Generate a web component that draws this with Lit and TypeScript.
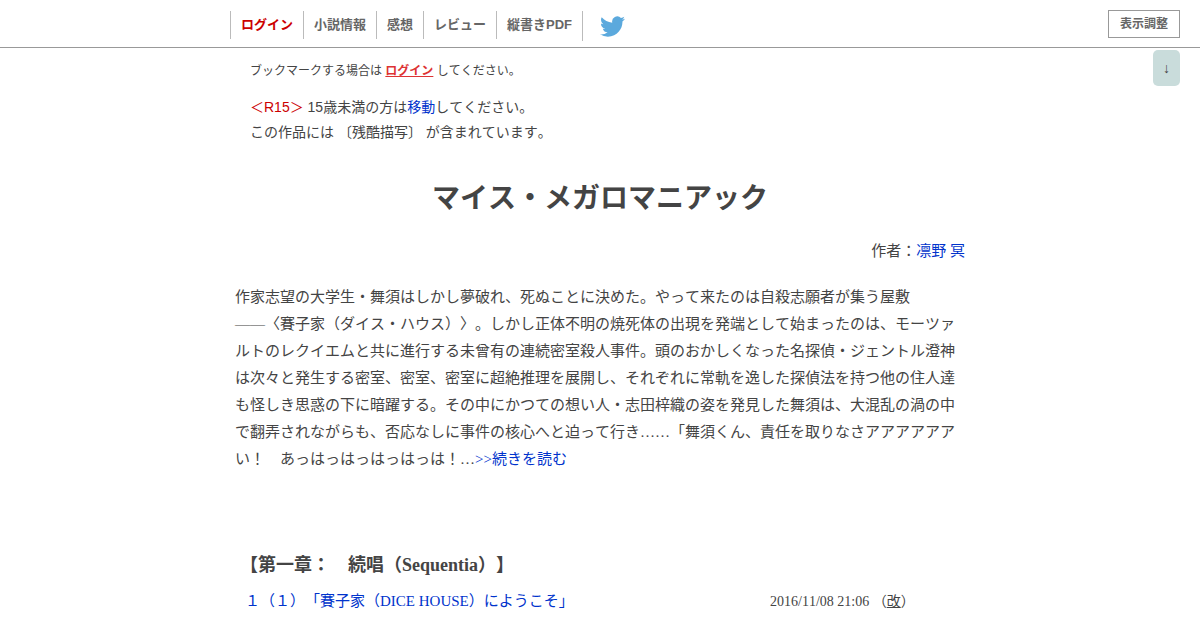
import { LitElement, html, css } from "lit";
import { customElement } from "lit/decorators.js";

interface NavItem {
  label: string;
  current?: boolean;
}

const NAV: NavItem[] = [
  { label: "ログイン", current: true },
  { label: "小説情報" },
  { label: "感想" },
  { label: "レビュー" },
  { label: "縦書きPDF" },
];

@customElement("site-header")
class SiteHeader extends LitElement {
  static styles = css`
    :host {
      display: block;
      font-family: "Liberation Sans", "Noto Sans CJK JP", sans-serif;
      border-bottom: 1px solid #999;
    }
    .bar {
      display: grid;
      grid-template-columns: 1fr minmax(0, 740px) 1fr;
      height: 47px;
    }
    .nav {
      grid-column: 2;
      display: flex;
      align-items: flex-start;
      padding-top: 11px;
    }
    .list {
      display: flex;
      margin: 0;
      padding: 0;
      list-style: none;
    }
    .link {
      display: block;
      padding: 0 10px;
      border-left: 1px solid #bbb;
      font-size: 13px;
      font-weight: bold;
      line-height: 28px;
      white-space: nowrap;
      color: #666;
      text-decoration: none;
    }
    .current {
      color: #c00;
    }
    .share {
      display: flex;
      align-items: center;
      height: 30px;
      padding-left: 17px;
      border-left: 1px solid #bbb;
    }
    .bird {
      display: block;
      width: 25px;
      height: 21px;
      fill: #5ba9dd;
    }
    .tools {
      justify-self: end;
      padding: 10px 20px 0 0;
    }
    .adjust {
      display: block;
      box-sizing: border-box;
      width: 72px;
      height: 28px;
      padding: 0 0 4px;
      border: 1px solid #999;
      background: #fff;
      color: #666;
      font: bold 12px "Liberation Sans", "Noto Sans CJK JP", sans-serif;
    }
  `;

  render() {
    return html`
      <header class="bar">
        <nav class="nav">
          <ul class="list">
            ${NAV.map(
              (item) => html`<li>
                <a class="link ${item.current ? "current" : ""}" href="#">${item.label}</a>
              </li>`
            )}
          </ul>
          <a class="share" href="#" aria-label="Twitter">
            <svg class="bird" viewBox="0 2 24 20" aria-hidden="true">
              <path
                d="M23.954 4.569a10 10 0 0 1-2.825.775 4.958 4.958 0 0 0 2.163-2.723c-.951.555-2.005.959-3.127 1.184a4.92 4.92 0 0 0-8.384 4.482C7.691 8.094 4.066 6.13 1.64 3.161a4.822 4.822 0 0 0-.666 2.475c0 1.71.87 3.213 2.188 4.096a4.904 4.904 0 0 1-2.228-.616v.061a4.923 4.923 0 0 0 3.946 4.827 4.996 4.996 0 0 1-2.212.085 4.937 4.937 0 0 0 4.604 3.417 9.868 9.868 0 0 1-6.102 2.105c-.39 0-.779-.023-1.17-.067a13.995 13.995 0 0 0 7.557 2.209c9.054 0 13.999-7.496 13.999-13.986 0-.209 0-.42-.015-.63a9.936 9.936 0 0 0 2.46-2.548z"
              />
            </svg>
          </a>
        </nav>
        <div class="tools"><button class="adjust" type="button">表示調整</button></div>
      </header>
    `;
  }
}

@customElement("app-root")
class AppRoot extends LitElement {
  static styles = css`
    :host {
      display: block;
      position: relative;
      color: #444;
      background: #fff;
      font-family: "Liberation Serif", "Noto Sans CJK JP", serif;
      font-size: 15px;
      line-height: 27px;
      font-kerning: none;
      text-spacing-trim: space-all;
    }
    a {
      color: #03c;
      text-decoration: none;
    }
    p,
    h1,
    h2,
    ul {
      margin: 0;
      padding: 0;
    }
    .down {
      position: absolute;
      top: 50px;
      right: 20px;
      width: 27px;
      height: 36px;
      padding: 2px 0 0;
      border: 0;
      border-radius: 5px;
      background: #c9dcdb;
      color: #444;
      font: 14px "Liberation Serif", serif;
    }
    .page {
      max-width: 730px;
      margin: 0 auto;
      padding-bottom: 12px;
    }
    .notices {
      padding: 13px 15px 0;
      font-family: "Liberation Sans", "Noto Sans CJK JP", sans-serif;
    }
    .bookmark {
      font-size: 12px;
      line-height: 20px;
    }
    .login {
      color: #d33;
      font-weight: bold;
      text-decoration: underline;
    }
    .warning {
      margin-top: 14px;
      font-size: 14px;
      line-height: 25px;
    }
    .rating {
      color: #c00;
    }
    .title {
      margin-top: 34px;
      font-size: 28px;
      line-height: 40px;
      text-align: center;
    }
    .author {
      margin-top: 19px;
      text-align: right;
    }
    .story {
      margin-top: 19px;
    }
    .dash {
      white-space: nowrap;
    }
    .chapter {
      margin-top: 79px;
      padding-left: 5px;
      font-size: 18px;
    }
    .episodes {
      margin-top: 9px;
      list-style: none;
    }
    .episode {
      display: grid;
      grid-template-columns: 525px 1fr;
      padding-left: 10px;
    }
    .date {
      font-size: 14px;
    }
    .revised {
      text-decoration: underline;
    }
  `;

  render() {
    return html`
      <site-header></site-header>
      <button class="down" type="button" aria-label="ページの下へ">↓</button>
      <main class="page" lang="ja">
        <div class="notices">
          <p class="bookmark">ブックマークする場合は <a class="login" href="#">ログイン</a> してください。</p>
          <p class="warning">
            <span class="rating">＜R15＞</span> 15歳未満の方は<a href="#">移動</a>してください。<br />この作品には
            〔残酷描写〕 が含まれています。
          </p>
        </div>
        <h1 class="title">マイス・メガロマニアック</h1>
        <p class="author">作者：<a href="#">凛野 冥</a></p>
        <p class="story">作家志望の大学生・舞須はしかし夢破れ、死ぬことに決めた。やって来たのは自殺志願者が集う屋敷<span class="dash">——〈賽</span>子家（ダイス・ハウス）〉。しかし正体不明の焼死体の出現を発端として始まったのは、モーツァルトのレクイエムと共に進行する未曾有の連続密室殺人事件。頭のおかしくなった名探偵・ジェントル澄神は次々と発生する密室、密室、密室に超絶推理を展開し、それぞれに常軌を逸した探偵法を持つ他の住人達も怪しき思惑の下に暗躍する。その中にかつての想い人・志田梓織の姿を発見した舞須は、大混乱の渦の中で翻弄されながらも、否応なしに事件の核心へと迫って行き……「舞須くん、責任を取りなさアアアアアアい！　あっはっはっはっはっは！…<a href="#">&gt;&gt;続きを読む</a></p>
        <h2 class="chapter">【第一章：　続唱（Sequentia）】</h2>
        <ul class="episodes">
          <li class="episode">
            <a href="#">１（１）「賽子家（DICE HOUSE）にようこそ」</a>
            <span class="date">2016/11/08 21:06 （<span class="revised">改</span>）</span>
          </li>
        </ul>
      </main>
    `;
  }
}
